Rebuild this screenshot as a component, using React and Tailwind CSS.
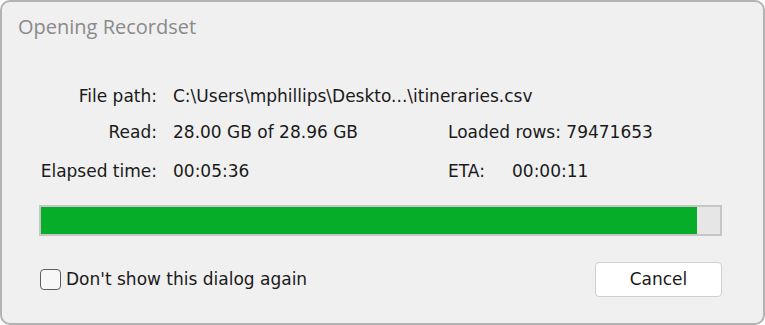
import React from "react";

const info = {
  filePath: "C:\\Users\\mphillips\\Deskto...\\itineraries.csv",
  readGb: 28.0,
  totalGb: 28.96,
  loadedRows: 79471653,
  elapsed: "00:05:36",
  eta: "00:00:11",
};

function App() {
  const pct = (info.readGb / info.totalGb) * 100;

  return (
    <div className="w-[765px] h-[325px] bg-white">
      <div
        className="h-full rounded-[10px] border-2 border-[#b3b3b3] bg-[#f0f0f0] text-[#1a1a1a]"
        style={{ fontFamily: '"DejaVu Sans", sans-serif' }}
      >
        {/* Title */}
        <div
          className="pl-[16px] pt-[12px] text-[20px] leading-[26px] text-[#8a8a8a]"
          style={{ fontFamily: '"Open Sans", sans-serif' }}
        >
          Opening Recordset
        </div>

        {/* Info rows */}
        <div className="mt-[46px] text-[17px] leading-[20px]">
          <div className="flex">
            <div className="ml-[28px] w-[127px] text-right">File path:</div>
            <div className="ml-[16px]">{info.filePath}</div>
          </div>
          <div className="mt-[16px] flex">
            <div className="ml-[28px] w-[127px] text-right">Read:</div>
            <div className="ml-[16px] w-[275px]">
              {info.readGb.toFixed(2)} GB of {info.totalGb.toFixed(2)} GB
            </div>
            <div>Loaded rows: {info.loadedRows}</div>
          </div>
          <div className="mt-[19px] flex">
            <div className="ml-[28px] w-[127px] text-right">Elapsed time:</div>
            <div className="ml-[16px] w-[275px]">{info.elapsed}</div>
            <div className="w-[64px]">ETA:</div>
            <div>{info.eta}</div>
          </div>
        </div>

        {/* Progress bar */}
        <div className="ml-[37px] mt-[24px] h-[31px] w-[683px] border-2 border-[#c6c6c6] bg-[#e6e6e6]">
          <div className="h-full bg-[#06ad29]" style={{ width: pct + "%" }} />
        </div>

        {/* Footer */}
        <div className="mt-[26px] flex items-center justify-between pl-[38px] pr-[41px]">
          <label className="flex items-center text-[17px]">
            <span className="h-[21px] w-[21px] rounded-[4px] border border-[#5f5f5f] bg-[#f7f7f7]" />
            <span className="ml-[5px]">Don't show this dialog again</span>
          </label>
          <button className="h-[35px] w-[127px] rounded-[4px] border border-[#d0d0d0] bg-white text-[17px] text-[#1a1a1a]">
            Cancel
          </button>
        </div>
      </div>
    </div>
  );
}

export default App;
